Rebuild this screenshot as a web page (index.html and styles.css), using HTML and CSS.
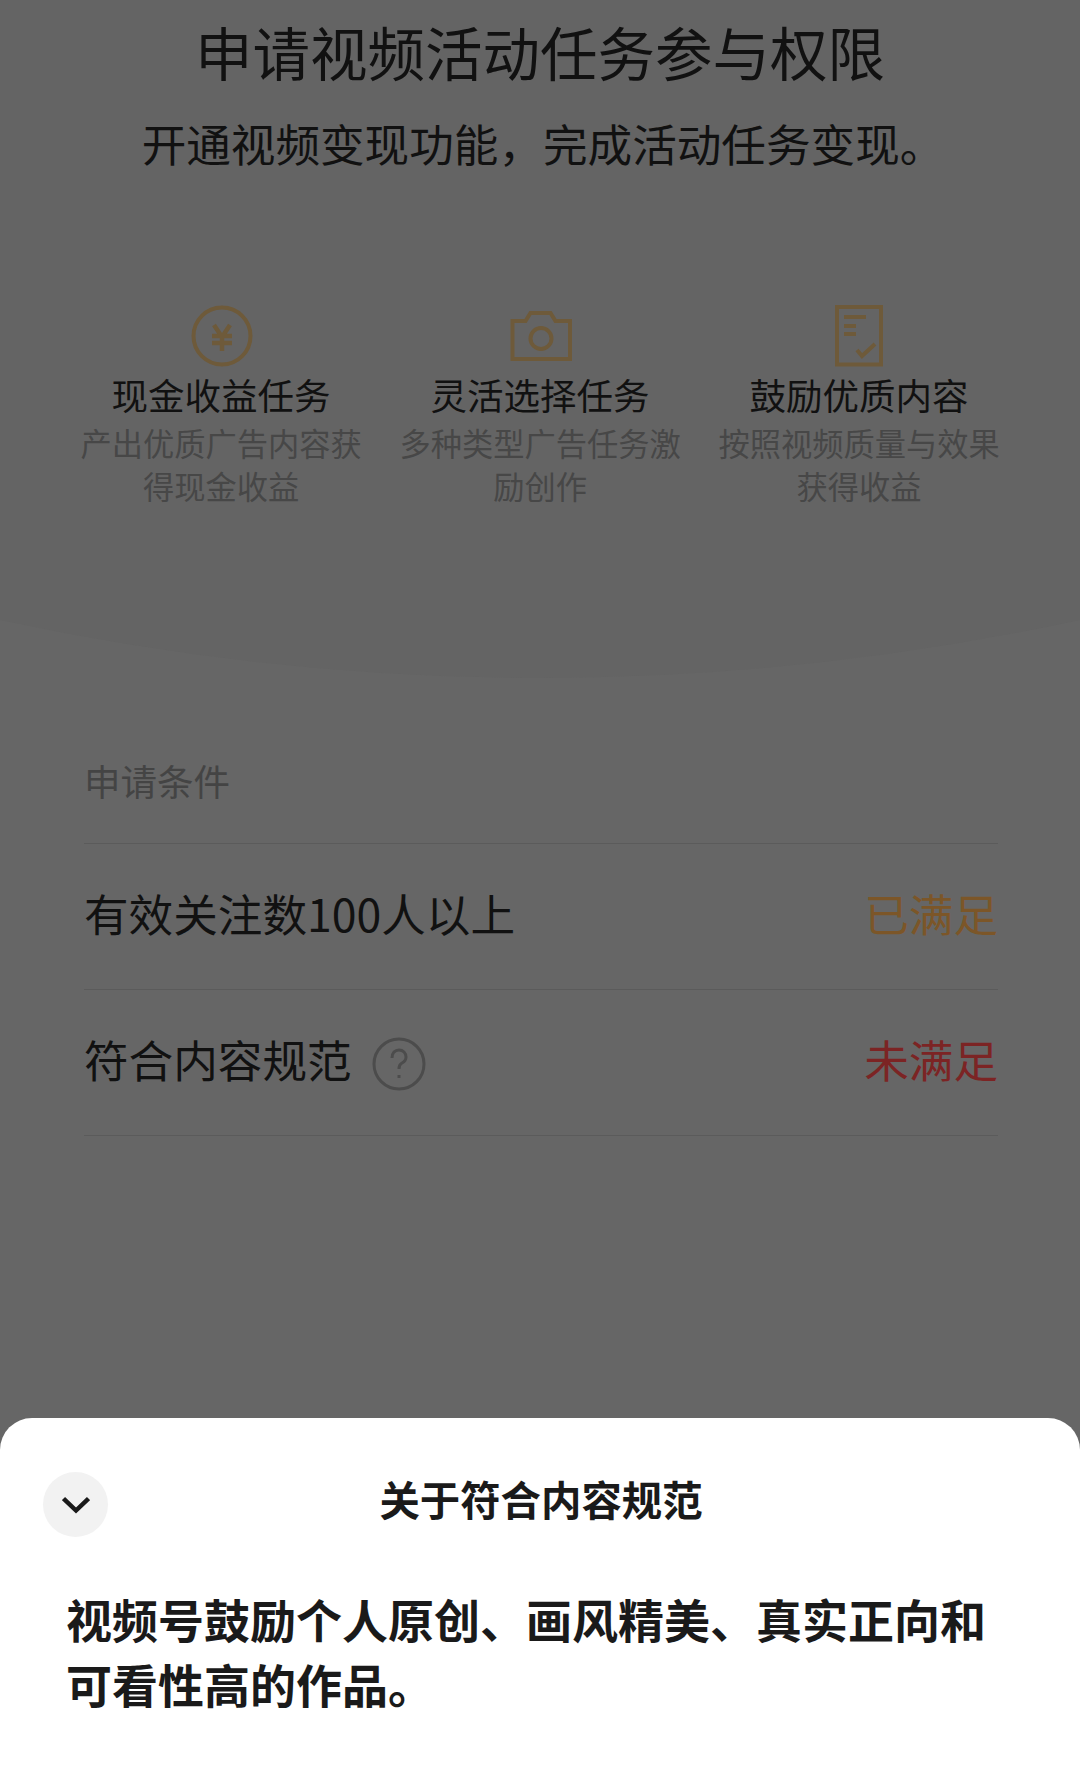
FILE: index.html
```html
<!DOCTYPE html>
<html lang="zh-CN">
<head>
    <meta charset="UTF-8">
    <meta name="viewport" content="width=device-width, initial-scale=1.0">
    <title>申请视频活动任务参与权限</title>
    <link rel="stylesheet" href="styles.css">
</head>
<body>
    <div class="page">
        <div class="hero">
            <h1>申请视频活动任务参与权限</h1>
            <p class="subtitle">开通视频变现功能，完成活动任务变现。</p>
            <div class="features">
                <div class="feature">
                    <svg class="feature-icon" viewBox="0 0 64 62">
                        <circle cx="33" cy="31" r="28.500"/>
                        <path class="yen" d="M25 20l8 12 8-12M23 31h20M23 38h20M33 32v14"/>
                    </svg>
                    <div class="feature-title">现金收益任务</div>
                    <div class="feature-desc">产出优质广告内容获得现金收益</div>
                </div>
                <div class="feature">
                    <svg class="feature-icon" viewBox="0 0 64 62">
                        <path d="M4.500 16h13l5-8h20l5 8h14.500v38h-57.500z"/>
                        <circle cx="33" cy="33.500" r="10.500"/>
                    </svg>
                    <div class="feature-title">灵活选择任务</div>
                    <div class="feature-desc">多种类型广告任务激励创作</div>
                </div>
                <div class="feature">
                    <svg class="feature-icon" viewBox="0 0 64 62">
                        <path d="M10 2h44v57.500h-44z"/>
                        <path d="M17 12h22M17 21h12M17 29h12M30 45l5 6 13-12"/>
                    </svg>
                    <div class="feature-title">鼓励优质内容</div>
                    <div class="feature-desc">按照视频质量与效果获得收益</div>
                </div>
            </div>
        </div>
        <svg class="hero-curve" viewBox="0 0 1080 58" preserveAspectRatio="none">
            <path d="M0 0Q540 116 1080 0z"/>
        </svg>

        <div class="conditions">
            <div class="conditions-title">申请条件</div>
            <div class="condition">
                <span class="condition-name">有效关注数100人以上</span>
                <span class="status status-ok">已满足</span>
            </div>
            <div class="condition">
                <span class="condition-name">符合内容规范
                    <svg class="help-icon" viewBox="0 0 54 54">
                        <circle cx="27" cy="27" r="25"/>
                        <path d="M20 21c0-5 3-8 7-8s7 3 7 7c0 3-2 5-4 6-2 1-3 3-3 6"/>
                        <path d="M27 38v3"/>
                    </svg>
                </span>
                <span class="status status-bad">未满足</span>
            </div>
        </div>

        <div class="sheet">
            <div class="sheet-head">
                <button class="sheet-close">
                    <svg viewBox="0 0 28 18">
                        <path d="M1.500 2.500l12.500 12 12.500-12"/>
                    </svg>
                </button>
                <div class="sheet-title">关于符合内容规范</div>
            </div>
            <p class="sheet-text">视频号鼓励个人原创、画风精美、真实正向和<br>可看性高的作品。</p>
        </div>
    </div>
</body>
</html>
```

FILE: styles.css
```css
body {
    margin: 0;
    background-color: #666666;
    font-family: "Noto Sans CJK SC", "Liberation Sans", sans-serif;
}
.page {
    width: 1080px;
    height: 1768px;
    overflow: hidden;
    display: flex;
    flex-direction: column;
}
.hero {
    height: 620px;
    flex-shrink: 0;
    background-color: #646464;
    text-align: center;
    color: #111111;
}
h1 {
    margin: 0;
    padding-top: 17px;
    font-size: 57.5px;
    font-weight: 400;
    line-height: 68px;
}
.subtitle {
    margin: 30px 0 0 6px;
    font-size: 44.600px;
    line-height: 56px;
}
.features {
    display: grid;
    grid-template-columns: repeat(3, 319px);
    justify-content: center;
    margin-top: 134px;
}
.feature {
    display: flex;
    flex-direction: column;
    align-items: center;
}
.feature-icon {
    width: 64px;
    height: 62px;
    fill: none;
    stroke: #6e5a3a;
    stroke-width: 4;
}
.yen {
    stroke-width: 4.500;
}
.feature-title {
    margin-top: 5px;
    font-size: 36.500px;
    line-height: 46px;
}
.feature-desc {
    width: 290px;
    margin-top: 3px;
    font-size: 31.250px;
    line-height: 43px;
    color: #474747;
}
.hero-curve {
    display: block;
    width: 1080px;
    height: 58px;
    flex-shrink: 0;
    fill: #646464;
}
.conditions {
    margin: 0 82px 0 84px;
}
.conditions-title {
    padding-top: 78px;
    height: 87px;
    font-size: 36.500px;
    line-height: 50px;
    color: #444444;
    border-bottom: 1px solid #5b5b5b;
}
.condition {
    display: flex;
    justify-content: space-between;
    align-items: center;
    height: 137px;
    padding-bottom: 8px;
    border-bottom: 1px solid #5b5b5b;
    font-size: 44.600px;
    color: #111111;
}
.condition-name {
    display: flex;
    align-items: center;
}
.help-icon {
    width: 54px;
    height: 54px;
    margin: 10px 0 0 20px;
    fill: none;
    stroke: #4c4c4c;
    stroke-width: 3;
}
.status-ok {
    color: #7c5628;
}
.status-bad {
    color: #7c2424;
}
.sheet {
    margin-top: auto;
    height: 350px;
    flex-shrink: 0;
    box-sizing: border-box;
    padding: 54px 43px 0 66px;
    background: white;
    border-radius: 32px 32px 0 0;
}
.sheet-head {
    position: relative;
    height: 65px;
    text-align: center;
}
.sheet-close {
    position: absolute;
    left: -23px;
    top: 0;
    width: 65px;
    height: 65px;
    padding: 0;
    border: none;
    border-radius: 50%;
    background-color: #f2f2f2;
    display: flex;
    align-items: center;
    justify-content: center;
}
.sheet-close svg {
    width: 28px;
    height: 18px;
    fill: none;
    stroke: #1a1a1a;
    stroke-width: 4.500;
}
.sheet-title {
    margin-left: -21px;
    font-size: 40.400px;
    font-weight: 700;
    line-height: 54px;
    color: #1a1a1a;
}
.sheet-text {
    margin: 49px 0 0;
    font-size: 46px;
    font-weight: 700;
    line-height: 65px;
    color: #1a1a1a;
}
```
